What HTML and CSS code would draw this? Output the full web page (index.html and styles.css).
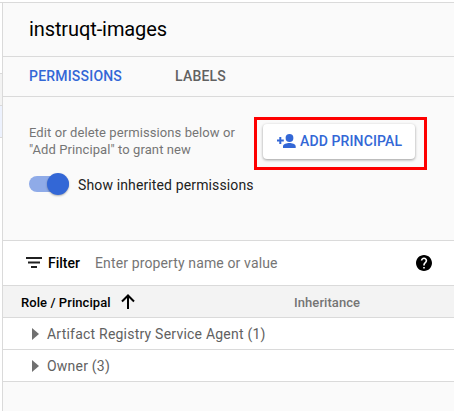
FILE: index.html
```html
<!DOCTYPE html>
<html lang="en">
<head>
<meta charset="utf-8">
<title>instruqt-images</title>
<link rel="stylesheet" href="styles.css">
</head>
<body>
<div class="page">
  <div class="rail"><div class="rail-blank"></div><div class="rail-head"></div><div class="rail-selected"></div></div>
  <main class="panel">
    <header class="title"><h1>instruqt-images</h1></header>
    <nav class="tabs"><span class="tab tab-active">PERMISSIONS</span><span class="tab">LABELS</span></nav>
    <section class="intro">
      <div class="intro-row">
        <p class="hint">Edit or delete permissions below or<br>"Add Principal" to grant new</p>
        <div class="highlight">
          <button class="add">
            <svg class="add-icon" width="19" height="14" viewBox="0 0 19 14"><circle cx="12.500" cy="4" r="3.900"/><path d="M6 14v-1.800C6 9.800 9.900 8.900 12.400 8.900s6.300.9 6.300 3.300V14zM2.300 3h2v2.500H6.800v1.900H4.300v2.500h-2V7.400H0V5.500h2.300z"/></svg>
            <span class="add-label">ADD PRINCIPAL</span>
          </button>
        </div>
      </div>
      <div class="toggle-row"><span class="switch"><span class="knob"></span></span><span class="toggle-label">Show inherited permissions</span></div>
    </section>
    <div class="filter">
      <svg width="16" height="12" viewBox="0 0 16 12"><path d="M0 0h16v2H0zM2 4.500h12v2.100H2zM5 9h6v2.100H5z" fill="#202020"/></svg>
      <span class="filter-name">Filter</span>
      <span class="filter-hint">Enter property name or value</span>
      <svg class="help" width="16" height="16" viewBox="2 2 20 20"><path d="M12 2C6.480 2 2 6.480 2 12s4.480 10 10 10 10-4.480 10-10S17.520 2 12 2zm1 17h-2v-2h2v2zm2.070-7.750l-.9.920C13.450 12.900 13 13.500 13 15h-2v-.5c0-1.100.450-2.100 1.170-2.830l1.240-1.260c.370-.360.590-.860.590-1.410 0-1.100-.9-2-2-2s-2 .9-2 2H8c0-2.210 1.790-4 4-4s4 1.790 4 4c0 .880-.360 1.680-.930 2.250z"/></svg>
    </div>
    <div class="row table-head">
      <div class="col-role"><span class="role-label">Role / Principal</span><svg width="14" height="15" viewBox="0 0 14 15"><path d="M7 15V1.500M1 7.500l6-6 6 6" fill="none" stroke="#000" stroke-width="2"/></svg></div>
      <span class="col-inherit">Inheritance</span>
    </div>
    <div class="row item"><span class="caret"></span><span class="agent">Artifact Registry Service Agent (1)</span></div>
    <div class="row item"><span class="caret"></span><span class="owner">Owner (3)</span></div>
  </main>
</div>
</body>
</html>
```
FILE: styles.css
```css
* { box-sizing: border-box; }
body { margin: 0; padding-top: 2px; height: 411px; background: #fff; overflow: hidden; font-family: Roboto, sans-serif; color: #000; }
.page { display: flex; height: 409px; border-top: 1px solid #dadada; }
.rail { width: 2px; }
.rail-blank { height: 71px; border-bottom: 1px solid #dadada; }
.rail-head { height: 32px; background: #f3f3f3; border-bottom: 1px solid #dadada; }
.rail-selected { height: 32px; background: #edf2fe; border-bottom: 1px solid #dadada; }
.panel { flex: 1; min-width: 0; background: #fafafa; border-left: 1px solid #dadada; white-space: nowrap; }
.title { display: flex; align-items: center; height: 54px; padding: 0 0 2px 26px; border-bottom: 1px solid #dadada; }
h1 { margin: 0; font-size: 20px; line-height: 24px; font-weight: 400; letter-spacing: -.1px; }
.tabs { display: flex; align-items: center; gap: 53px; height: 40px; padding: 0 0 2px 26px; border-bottom: 1px solid #dadada; }
.tab { font-size: 14px; line-height: 20px; font-weight: 500; letter-spacing: .2px; color: #616161; }
.tab-active { color: #3367d6; }
.intro { height: 143px; padding-top: 20px; }
.intro-row { display: flex; justify-content: space-between; padding: 0 27px 0 26px; }
.hint { margin: 7px 0 0; font-size: 13px; line-height: 17px; color: #757575; letter-spacing: .09px; }
.highlight { width: 173px; height: 53px; padding: 4px 6px; border: 3px solid #fe0000; }
.add { display: flex; align-items: center; gap: 4px; width: 152px; height: 35px; padding: 0 0 1px 14px; border: 0; border-radius: 4px; background: #fff; box-shadow: 0 1px 3px rgba(0,0,0,.38); color: #3367d6; font: 500 14px/20px Roboto, sans-serif; letter-spacing: .12px; }
.add-icon { fill: #3367d6; }
.toggle-row { display: flex; align-items: center; gap: 9px; height: 24px; margin-top: 2px; padding-left: 26px; }
.switch { display: flex; align-items: center; justify-content: flex-end; width: 40px; height: 16px; border-radius: 8px; background: #8fabe8; }
.knob { flex: none; width: 22px; height: 22px; border-radius: 50%; background: #3367d6; box-shadow: 0 1px 2px rgba(0,0,0,.3); }
.toggle-label { padding-top: 2px; font-size: 14px; line-height: 20px; letter-spacing: .13px; color: #212121; }
.filter { display: flex; align-items: center; height: 46px; padding: 0 22px 0 23px; background: #fff; border: solid #dadada; border-width: 1px 0; }
.filter-name { margin-left: 6px; font-size: 14px; line-height: 20px; font-weight: 500; }
.filter-hint { margin-left: 15px; font-size: 14px; line-height: 20px; letter-spacing: .13px; color: #757575; }
.help { margin-left: auto; }
.row { display: flex; align-items: center; height: 32px; background: #fff; border-bottom: 1px solid #dadada; }
.table-head { padding-left: 18px; background: #f3f3f3; font-size: 13px; line-height: 18px; font-weight: 500; letter-spacing: .07px; }
.col-role { display: flex; align-items: center; gap: 10px; width: 273px; }
.role-label, .col-inherit { padding-top: 2px; }
.col-inherit { color: #757575; }
.item { padding-left: 29px; gap: 8px; font-size: 14px; line-height: 20px; color: #616161; letter-spacing: .22px; }
.caret { border: solid transparent; border-width: 6px 0 6px 7px; border-left-color: #707070; }
```
